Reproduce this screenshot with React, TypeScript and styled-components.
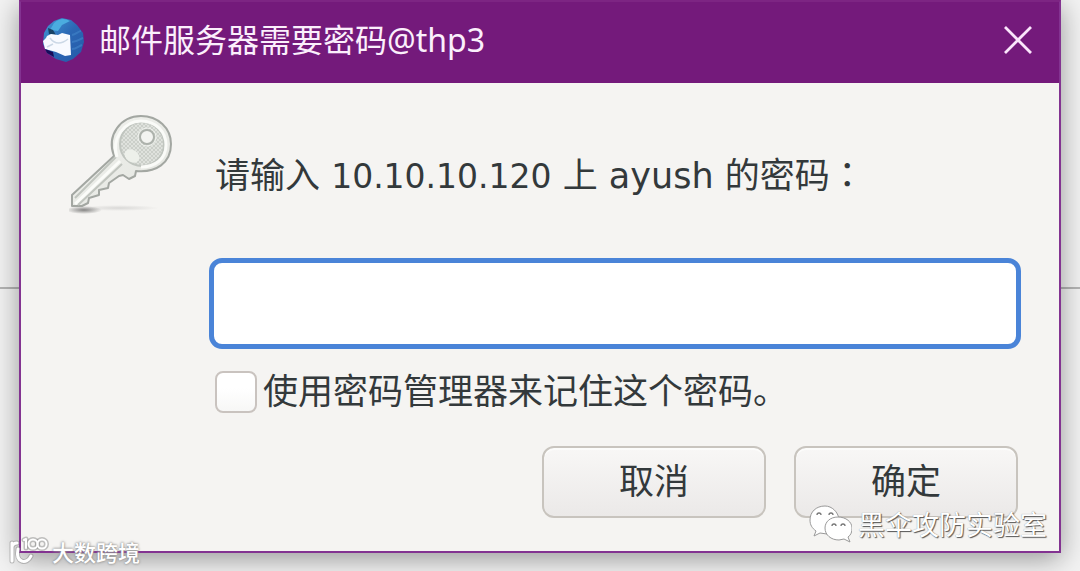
import React, { useState } from "react";
import styled, { createGlobalStyle } from "styled-components";

const GlobalStyle = createGlobalStyle`
  *, *::before, *::after { box-sizing: border-box; }
  html, body { margin: 0; }
  body {
    min-height: 100vh;
    color: #33393b;
    font-family: "DejaVu Sans", "Noto Sans CJK SC", sans-serif;
    font-size: 35px;
    line-height: 42px;
  }
`;

const Desktop = styled.div`
  position: relative;
  min-height: 100vh;
  padding: 0 19px 19px;
  overflow: hidden;
  background: linear-gradient(#b4b4b4, #b4b4b4) 0 287px / 100% 2px no-repeat, #f3f3f3;
`;

const Dialog = styled.form`
  border: 2px solid #833391;
  border-top-color: #7d2583;
  background: #f5f4f2;
  box-shadow: 0 6px 26px rgba(0, 0, 0, 0.38);
`;

const TitleBar = styled.header`
  display: flex;
  align-items: center;
  gap: 14px;
  height: 81px;
  padding: 0 27px 5px 20px;
  background: #741a7b;
  color: #fbeffc;
`;

const Title = styled.h1`
  flex: 1;
  margin: 0;
  font: 400 32px/40px "Noto Sans", "Noto Sans CJK SC", sans-serif;
`;

const CloseButton = styled.button`
  display: flex;
  padding: 0;
  border: 0;
  background: none;
  color: #fbe6fc;
`;

const Content = styled.div`
  display: grid;
  grid-template-columns: 140px 1fr;
  padding: 30px 38px 33px 48px;
`;

const Fields = styled.div`
  display: flex;
  flex-direction: column;
`;

const Prompt = styled.label`
  padding: 39px 6px 60px;
`;

const Host = styled.span`
  font-size: 33px;
`;

const Colon = styled.span`
  font-family: "Noto Sans CJK TC", sans-serif;
`;

const PasswordInput = styled.input`
  width: 100%;
  height: 91px;
  padding: 0 20px;
  border: 5px solid #4a84d8;
  border-radius: 13px;
  outline: 0;
  background: #fff;
  color: inherit;
  font: inherit;
`;

const Remember = styled.label`
  display: flex;
  align-items: center;
  gap: 6px;
  padding: 22px 6px 0;
`;

const CheckBox = styled.input`
  appearance: none;
  flex: none;
  width: 42px;
  height: 42px;
  margin: 0;
  border: 2px solid #c9c3bf;
  border-radius: 8px;
  background: linear-gradient(#fff 40%, #f7f7f6);
  &:checked { background: #4a84d8; }
`;

const Actions = styled.div`
  display: flex;
  justify-content: flex-end;
  gap: 28px;
  padding: 33px 3px 0;
`;

const Button = styled.button`
  width: 224px;
  height: 72px;
  padding: 0;
  border: 2px solid #c8c4be;
  border-radius: 12px;
  background: linear-gradient(#f8f7f6, #ebe9e8);
  box-shadow: inset 0 2px #fcfcfb;
  color: inherit;
  font: inherit;
`;

const Watermark = styled.div<{ $corner: "left" | "right" }>`
  position: absolute;
  display: flex;
  align-items: center;
  color: #fff;
  white-space: nowrap;
  pointer-events: none;
  font-family: "Noto Sans CJK SC", sans-serif;
  ${(p) =>
    p.$corner === "left"
      ? `left: 9px; bottom: 6px; gap: 4px; font-size: 22px; line-height: 30px; font-weight: 500;
         text-shadow: 0 0 2px #888, 0 0 3px #999;`
      : `right: 33px; bottom: 28px; gap: 6px; font-size: 27px; line-height: 40px; font-weight: 400;
         text-shadow: 1px 1px 1px #555, 0 0 1px #888;`}
`;

const MailIcon = () => (
  <svg width="44" height="44" viewBox="0 0 44 44" aria-hidden="true">
    <defs>
      <linearGradient id="bird" x1="0" y1="0" x2="1" y2="1">
        <stop offset="0" stopColor="#439bd6" />
        <stop offset="0.5" stopColor="#2b67b4" />
        <stop offset="1" stopColor="#2459a8" />
      </linearGradient>
    </defs>
    <path d="M3 15 7 8l6-5 8-3 9 2 6 5 6 8 1 9-3 10-8 7-7 3-10-3-9-6-4-9Z" fill="url(#bird)" />
    <path d="M13 5c5-5 11-5 16-2l-8 4-4 6-8-1Z" fill="#4bacdf" />
    <path d="M31 17c4-1 7-4 9-4M31 24c5 0 8-3 11-4M31 31c4 0 7-3 10-4" fill="none" stroke="#3f80c6" strokeWidth="2" opacity="0.7" />
    <path d="m7 10 5 2 3 5-7-1Z" fill="#174266" />
    <path d="m6 18 4-2 7 1 4-2 8 2 1 20-6 1-9-4-11-3-2-8 3-3Z" fill="#f8faff" />
    <path d="m4 31 8 3 1 5-7-4Z" fill="#180b59" />
    <path d="M9 20c5 7 12 6 18 1M12 26l-6 3" fill="none" stroke="#ccd8e6" strokeWidth="1.6" />
  </svg>
);

const KeyIcon = () => (
  <svg width="110" height="108" viewBox="0 0 110 108" aria-hidden="true">
    <defs>
      <linearGradient id="metal" x1="0" y1="0" x2="1" y2="1">
        <stop offset="0" stopColor="#f2f3ef" />
        <stop offset="1" stopColor="#e2e4df" />
      </linearGradient>
      <radialGradient id="shade">
        <stop offset="0" stopColor="#555" stopOpacity="0.7" />
        <stop offset="1" stopColor="#555" stopOpacity="0" />
      </radialGradient>
      <pattern id="grain" width="4" height="4" patternUnits="userSpaceOnUse">
        <rect width="4" height="4" fill="#dfe2dd" />
        <path d="M0 0h2v2H0zM2 2h2v2H2z" fill="#cbcfc9" />
      </pattern>
    </defs>
    <ellipse cx="15" cy="97" rx="18" ry="4" fill="url(#shade)" />
    <ellipse cx="50" cy="95" rx="40" ry="3" fill="url(#shade)" opacity="0.25" />
    <path
      d="M45 43C37 22 52 3 72 3c17 0 30 12 30 28 0 19-15 29-35 27l-1 5-6 3-6-4-4 1-10 7-1 5-9 2v5l-10 3-1 5-6 3H3V82Z"
      fill="url(#metal)" stroke="#a3a7a2" strokeWidth="2" strokeLinejoin="round"
    />
    <circle cx="73" cy="31" r="22" fill="url(#grain)" stroke="#c0c5bf" strokeWidth="2" />
    <path d="M6 85 47 44M9 92l44-41" fill="none" stroke="#c1c5bf" strokeWidth="2" />
    <path d="M6 91 51 48" fill="none" stroke="#fbfcf9" strokeWidth="3" />
    <path d="M48 44c-6-18 7-36 24-36 15 0 25 11 25 24 0 14-11 22-25 22" fill="none" stroke="#fafbf8" strokeWidth="3" />
    <ellipse cx="63" cy="43" rx="8" ry="6" fill="#edf0ea" transform="rotate(35 63 43)" />
    <circle cx="78" cy="24" r="9" fill="none" stroke="#eff1ed" strokeWidth="1" />
    <circle cx="78" cy="24" r="7" fill="#f3f4f1" stroke="#adb2ac" strokeWidth="2" />
  </svg>
);

const CloseIcon = () => (
  <svg width="28" height="28" viewBox="0 0 28 28" aria-hidden="true">
    <path d="m1 1 26 26M27 1 1 27" stroke="currentColor" strokeWidth="2.8" />
  </svg>
);

const ChatIcon = () => (
  <svg width="43" height="38" viewBox="0 0 43 38" aria-hidden="true">
    <g fill="#fff" stroke="#999" strokeWidth="1">
      <path d="M16 1C7 1 1 7 1 15c0 5 2 8 6 11l-2 5 6-3 7 1C27 28 31 22 30 14 29 7 23 1 16 1Z" />
      <path d="M29 12c-8 0-13 5-13 11 0 7 6 12 14 12l5-1 6 3-2-5c3-2 4-5 4-9 0-6-6-11-14-11Z" />
    </g>
    <g fill="none" stroke="#777" strokeWidth="1.3">
      <path d="M8 10a2 2 0 0 1 4 0M20 10a2 2 0 0 1 4 0M23 21a2 2 0 0 1 4 0M32 21a2 2 0 0 1 4 0" />
    </g>
  </svg>
);

const HundredIcon = () => (
  <svg width="39" height="29" viewBox="0 0 39 29" overflow="visible" aria-hidden="true">
    <g fill="none" strokeLinecap="round" strokeLinejoin="round">
      <g stroke="#888" strokeOpacity="0.5" strokeWidth="5">
        <path d="M3 6v18M3 10q1-4 5-4M9 12c-3 14 9 16 13 7M15 3l2-1v9" />
        <circle cx="24" cy="7" r="4.5" />
        <circle cx="33" cy="7" r="4.5" />
      </g>
      <g stroke="#fff" strokeWidth="3">
        <path d="M3 6v18M3 10q1-4 5-4M9 12c-3 14 9 16 13 7" />
        <path d="m15 3 2-1v9" strokeWidth="2" />
        <circle cx="24" cy="7" r="4.5" strokeWidth="2" />
        <circle cx="33" cy="7" r="4.5" strokeWidth="2" />
      </g>
    </g>
  </svg>
);

export default function App() {
  const [password, setPassword] = useState("");
  return (
    <>
      <GlobalStyle />
      <Desktop>
        <Dialog onSubmit={(e) => e.preventDefault()}>
          <TitleBar>
            <MailIcon />
            <Title>邮件服务器需要密码@thp3</Title>
            <CloseButton type="button" aria-label="关闭">
              <CloseIcon />
            </CloseButton>
          </TitleBar>
          <Content>
            <KeyIcon />
            <Fields>
              <Prompt htmlFor="password">
                请输入 <Host>10.10.10.120</Host> 上 ayush 的密码<Colon>：</Colon>
              </Prompt>
              <PasswordInput
                id="password"
                type="password"
                value={password}
                onChange={(e) => setPassword(e.target.value)}
              />
              <Remember>
                <CheckBox type="checkbox" />
                使用密码管理器来记住这个密码。
              </Remember>
              <Actions>
                <Button type="button">取消</Button>
                <Button type="submit">确定</Button>
              </Actions>
            </Fields>
          </Content>
        </Dialog>
        <Watermark $corner="right">
          <ChatIcon />
          黑伞攻防实验室
        </Watermark>
        <Watermark $corner="left">
          <HundredIcon />
          大数跨境
        </Watermark>
      </Desktop>
    </>
  );
}
